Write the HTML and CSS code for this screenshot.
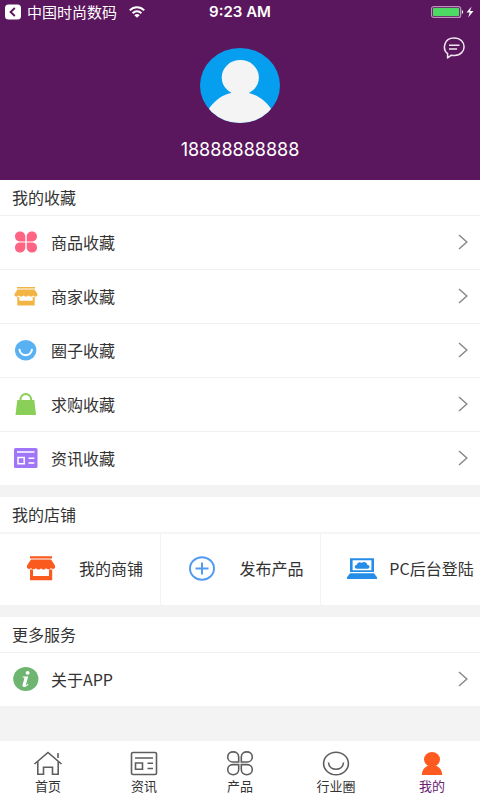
FILE: index.html
```html
<!DOCTYPE html>
<html lang="zh-CN">
<head>
<meta charset="utf-8">
<meta name="viewport" content="width=device-width, initial-scale=1">
<title>我的</title>
<link rel="stylesheet" href="styles.css">
</head>
<body>
<svg class="defs" aria-hidden="true">
  <symbol id="chevron" viewBox="0 0 10 16"><path d="M1 1 8.800 8 1 15" fill="none" stroke="#8a8a8a" stroke-width="1.500"/></symbol>
</svg>
<header class="profile">
  <div class="status">
    <a class="back" href="#">
      <svg width="16" height="16" viewBox="0 0 16 16"><rect width="16" height="15" y=".5" rx="3.500" fill="#fff"/><path d="M9.800 4 5.600 8l4.200 4" fill="none" stroke="#5b175d" stroke-width="1.900"/></svg>
      <span>中国时尚数码</span>
    </a>
    <svg class="wifi" width="16" height="12" viewBox="0 0 16 12" fill="none" stroke="#fff" stroke-width="2"><path d="M.8 4.400C4.800.2 11.200.2 15.200 4.400"/><path d="M3.600 7.200c2.500-2.500 6.300-2.500 8.800 0"/><path d="M8 11.800 5.300 9.200c1.500-1.500 3.900-1.500 5.400 0z" fill="#fff" stroke="none"/></svg>
    <span class="time">9:23 AM</span>
    <svg class="battery" width="44" height="12" viewBox="0 0 44 12"><rect x=".6" y=".6" width="29" height="10.800" rx="2" fill="none" stroke="#b794b8" stroke-width="1.200"/><rect x="2" y="2" width="26.200" height="8" rx=".8" fill="#4cd964"/><path d="M30.800 4c1.800.4 1.800 3.600 0 4z" fill="#eee"/><path d="M40.500.5 35.500 6.600h3.200l-1.500 4.900 5.300-6.500h-3.400z" fill="#fff"/></svg>
  </div>
  <button class="message" aria-label="消息">
    <svg width="22" height="22" viewBox="0 0 22 22" fill="none" stroke="#efe6ef" stroke-width="1.500" stroke-linejoin="round"><path d="M4.600 21v-4.300C-.6 13 .3 1 11 1c13.500 0 13.200 17.200.5 17.500-1.300 0-2.300-.1-3.200-.3z"/><path d="M6 8.200h10.500M6 12h8"/></svg>
  </button>
  <svg class="avatar" width="80" height="75" viewBox="0 0 80 75">
    <clipPath id="face"><ellipse cx="40" cy="37.500" rx="40" ry="37.500"/></clipPath>
    <g clip-path="url(#face)"><path fill="#069fef" d="M0 0h80v75H0z"/><ellipse cx="40.300" cy="29.500" rx="18.600" ry="17.500" fill="#f4f4f4"/><path d="M32 43h16.500c-1 1.500 0 2 2 2.600C59 48 66 53 72 62v13H8V62c6-9 13-14 21-16.400 2.500-.7 3.500-1.200 3-2.600z" fill="#f4f4f4"/></g>
  </svg>
  <p class="phone">18888888888</p>
</header>
<main>
  <section>
    <h2>我的收藏</h2>
    <a class="row" href="#">
      <svg width="26" height="26" viewBox="0 0 26 26" fill="#ff6485"><path d="M12.300 12.400V7.700C12.300.8 2 .8 2 7.300c0 2.900 2 5.100 5 5.100zM13.700 12.400V7.700C13.700.8 24 .8 24 7.300c0 2.900-2 5.100-5 5.100zM12.300 13.600v4.700C12.300 25.200 2 25.200 2 18.700c0-2.900 2-5.100 5-5.100zM13.700 13.600v4.700c0 6.900 10.300 6.900 10.300.4 0-2.900-2-5.100-5-5.100z"/></svg>
      <span>商品收藏</span><svg class="more" width="10" height="16"><use href="#chevron"/></svg>
    </a>
    <a class="row" href="#">
      <svg width="26" height="26" viewBox="0 0 26 26" fill="#f2b443"><path d="M4 4h18v1.500H4zM4.500 6.500h17L24.500 11c.4 3-3.600 3.500-4.300 1.200-.7 1.800-3.900 1.800-4.700 0-.8 1.800-4.200 1.800-5 0-.8 1.800-4 1.800-4.700 0C5.100 14.500.8 14 1.500 11z"/><path d="M4.300 14h2v3.700h13.400V14h2v8.500H4.300z"/></svg>
      <span>商家收藏</span><svg class="more" width="10" height="16"><use href="#chevron"/></svg>
    </a>
    <a class="row" href="#">
      <svg width="26" height="26" viewBox="0 0 26 26"><ellipse cx="12.700" cy="13.200" rx="10.700" ry="10.200" fill="#57b1f2"/><path d="M6.500 12.700c.7 7.300 11.700 7.300 12.400 0" fill="none" stroke="#fff" stroke-width="2" stroke-linecap="round"/></svg>
      <span>圈子收藏</span><svg class="more" width="10" height="16"><use href="#chevron"/></svg>
    </a>
    <a class="row" href="#">
      <svg width="26" height="26" viewBox="0 0 26 26"><path d="M4.300 9h17l1.700 15H2.500z" fill="#8acf57"/><path d="M7.300 10C7.300.5 18.300.5 18.300 10" fill="none" stroke="#8acf57" stroke-width="2"/></svg>
      <span>求购收藏</span><svg class="more" width="10" height="16"><use href="#chevron"/></svg>
    </a>
    <a class="row" href="#">
      <svg width="26" height="26" viewBox="0 0 26 26"><rect x="1" y="3" width="23.500" height="20" rx="1.600" fill="#a175f8"/><path d="M4 7h17.500M15.500 13.200h5.800M15.500 18h5.800M5 12.500h6.200v6.200H5z" fill="none" stroke="#fff" stroke-width="1.500"/></svg>
      <span>资讯收藏</span><svg class="more" width="10" height="16"><use href="#chevron"/></svg>
    </a>
  </section>
  <section>
    <h2>我的店铺</h2>
    <div class="shop">
      <a href="#">
        <svg width="32" height="28" viewBox="0 0 32 28" fill="#fa5a1e"><path d="M5 2.200h22v2.200H5zM6 5.600h20l4 5.800v2.400c-.7 1.500-3 1.500-4 .2-1 1.800-4 1.800-5 0-1 2-4 2-5 0-1 2-4 2-5 0-1 1.800-4 1.800-5 0-1 1.300-3.300 1.300-4-.2v-2.400z"/><path d="M5 15.500h3v6.600h16v-6.600h3.200v10.700H5z"/></svg>
        <span>我的商铺</span>
      </a>
      <a href="#">
        <svg width="32" height="28" viewBox="0 0 32 28" fill="none" stroke="#529cf0" stroke-width="2"><ellipse cx="16" cy="14.500" rx="12" ry="11.300"/><path d="M16 8.500v12M9.500 14.500h13"/></svg>
        <span>发布产品</span>
      </a>
      <a href="#">
        <svg width="32" height="28" viewBox="0 0 32 28" fill="#258de8"><path fill-rule="evenodd" d="M4 4.300h24V18H4zM6.600 6.300v9.900h18.800V6.300z"/><path d="M4 19.200h24l3 4V25H1v-1.800z"/><path d="M11 14.700c-3 0-3-4 0-4 .3-2.700 3.600-3 4.600-1.800 1.800-1.500 5.400-.8 5.600 1.800 3 0 3 4 0 4z"/></svg>
        <span>PC后台登陆</span>
      </a>
    </div>
  </section>
  <section>
    <h2>更多服务</h2>
    <a class="row" href="#">
      <svg width="26" height="26" viewBox="0 0 26 26"><ellipse cx="12.800" cy="13" rx="12.600" ry="12" fill="#6eb572"/><ellipse cx="14.600" cy="6.900" rx="2" ry="1.800" fill="#fff"/><path d="M9.800 10.500h5.500l-2.400 8c-.2.900.4.800 1.900-.8l.7.600c-2.500 3.700-6.800 3.700-5.900.3l1.800-6.200c.2-.8-.5-1-1.800-1z" fill="#fff"/></svg>
      <span>关于APP</span><svg class="more" width="10" height="16"><use href="#chevron"/></svg>
    </a>
  </section>
</main>
<nav class="tabs">
  <a href="#">
    <svg width="30" height="26" viewBox="0 0 30 26"><path d="M1.500 14 15 2.500 28.500 14M4.800 11.500v12.700h5.700v-7h9v7h5.700V11.500M25 3v5" fill="none" stroke="#5e5e5e" stroke-width="1.600"/></svg>
    <span>首页</span>
  </a>
  <a href="#">
    <svg width="30" height="26" viewBox="0 0 30 26" fill="none" stroke="#5e5e5e" stroke-width="1.600"><rect x="2.500" y="2.500" width="25" height="22" rx="1.500"/><path d="M6 8h18M18.500 13.300H24M18.500 18.500H24M6.500 13h7v6.300h-7z"/></svg>
    <span>资讯</span>
  </a>
  <a href="#">
    <svg width="30" height="26" viewBox="0 0 30 26" fill="none" stroke="#5e5e5e" stroke-width="1.600"><path d="M13.700 12V7c0-6.800-11-6.800-11 0 0 2.800 2.200 5 5 5zM16.300 12V7c0-6.800 11-6.800 11 0 0 2.800-2.200 5-5 5zM13.700 14.600v5c0 6.800-11 6.800-11 0 0-2.800 2.200-5 5-5zM16.300 14.600v5c0 6.800 11 6.800 11 0 0-2.800-2.200-5-5-5z"/></svg>
    <span>产品</span>
  </a>
  <a href="#">
    <svg width="30" height="26" viewBox="0 0 30 26" fill="none" stroke="#5e5e5e" stroke-width="1.600"><ellipse cx="15" cy="13.500" rx="12.400" ry="11.300"/><path d="M7.500 12.500c.5 9 14.500 9 15 0"/></svg>
    <span>行业圈</span>
  </a>
  <a class="current" href="#" aria-current="page">
    <svg width="30" height="26" viewBox="0 0 30 26" fill="#ff5a1f"><ellipse cx="15" cy="9.300" rx="8" ry="7.300"/><path d="M11 14.500h8c0 1 .5 1.500 1.500 2 2.500 1.300 4.500 4 4.800 8.500H4.700c.3-4.500 2.300-7.200 4.800-8.500 1-.5 1.500-1 1.500-2z"/></svg>
    <span>我的</span>
  </a>
</nav>
</body>
</html>
```
FILE: styles.css
```css
* {
  box-sizing: border-box;
}

body {
  display: flex;
  flex-direction: column;
  min-height: 100vh;
  margin: 0;
  background: #f3f3f3;
  color: #333;
  font: 16px/24px "Noto Sans CJK SC", sans-serif;
}

a {
  color: inherit;
  text-decoration: none;
}

svg {
  display: block;
  flex: none;
}

.defs {
  position: absolute;
  width: 0;
  height: 0;
}

.profile {
  position: relative;
  display: flex;
  flex-direction: column;
  align-items: center;
  padding-bottom: 18px;
  background: #5b175d;
  color: #fff;
}

.status {
  position: relative;
  display: flex;
  align-items: center;
  align-self: stretch;
  height: 24px;
  padding: 0 5px;
  font-size: 15px;
}

.back {
  display: flex;
  align-items: center;
  gap: 6px;
}

.wifi {
  margin-left: 12px;
}

.time {
  position: absolute;
  left: 0;
  right: 0;
  text-align: center;
  font-family: Inter, sans-serif;
  font-weight: 600;
  pointer-events: none;
}

.battery {
  margin-left: auto;
}

.message {
  position: absolute;
  top: 37px;
  right: 15px;
  padding: 0;
  border: 0;
  background: none;
}

.avatar {
  margin-top: 24px;
}

.phone {
  margin: 15px 0 0;
  font-family: Inter, sans-serif;
  font-size: 18px;
}

main {
  display: flex;
  flex-direction: column;
  flex: 1;
  gap: 12px;
}

section {
  background: #fff;
}

h2 {
  margin: 0;
  padding: 5px 12px 6px;
  font-size: 16px;
  font-weight: 400;
}

.row {
  display: flex;
  align-items: center;
  gap: 12px;
  height: 54px;
  padding: 0 12px 2px 13px;
  border-top: 1px solid #f1f1f1;
}

.more {
  margin-left: auto;
}

.shop {
  display: grid;
  grid-template-columns: repeat(3, 1fr);
  height: 73px;
  border-top: 2px solid #f5f5f5;
}

.shop a {
  display: grid;
  grid-template-columns: 54px 1fr;
  align-items: center;
  justify-items: center;
  padding: 0 6px 3px 14px;
  white-space: nowrap;
}

.shop a + a {
  border-left: 1px solid #f3f3f3;
}

.tabs {
  display: grid;
  grid-template-columns: repeat(5, 1fr);
  height: 59px;
  padding-top: 9px;
  background: #fff;
  font-size: 13px;
  line-height: 20px;
}

.tabs a {
  display: flex;
  flex-direction: column;
  align-items: center;
}

.tabs .current {
  color: #6a2271;
}
```
